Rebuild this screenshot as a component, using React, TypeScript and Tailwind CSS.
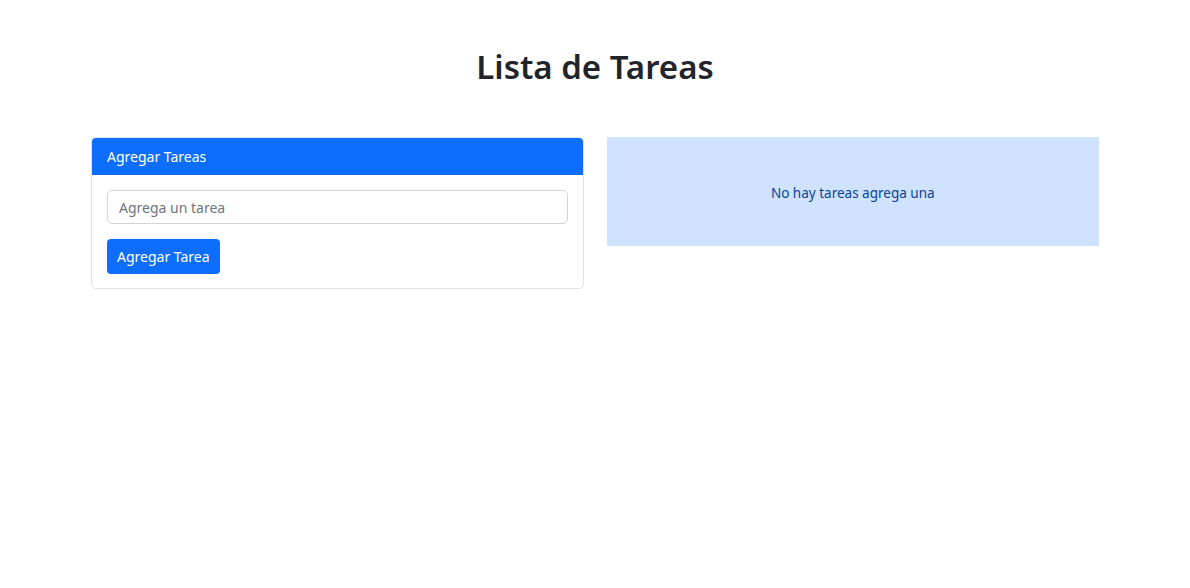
export default function App() {
  return (
    <div className="min-h-screen bg-white font-['Noto_Sans',sans-serif] text-[#212529]">
      <h1 className="pt-[45px] text-center text-[33px] font-semibold leading-[44px]">Lista de Tareas</h1>

      <div className="mx-auto mt-[48px] grid w-[1008px] grid-cols-2 items-start gap-[23px]">
        {/* Formulario */}
        <div className="overflow-hidden rounded-[5px] border border-[#dfe2e6]">
          <div className="flex h-[37px] items-center bg-[#0d6efd] px-[15px] text-[14px] text-white">Agregar Tareas</div>
          <div className="flex flex-col items-start gap-[15px] px-[15px] pb-[14px] pt-[15px]">
            <input
              placeholder="Agrega un tarea"
              className="h-[34px] w-full rounded-[5px] border border-[#ced4da] px-[11px] text-[14px] text-[#212529] placeholder:text-[#6c757d] outline-none"
            />
            <button className="h-[35px] rounded-[4px] bg-[#0d6efd] px-[10px] text-[14px] text-white">Agregar Tarea</button>
          </div>
        </div>

        {/* Lista */}
        <div className="flex h-[109px] items-center justify-center bg-[#cfe2ff] pt-[3px] text-[13.5px] text-[#084298]">
          No hay tareas agrega una
        </div>
      </div>
    </div>
  );
}
